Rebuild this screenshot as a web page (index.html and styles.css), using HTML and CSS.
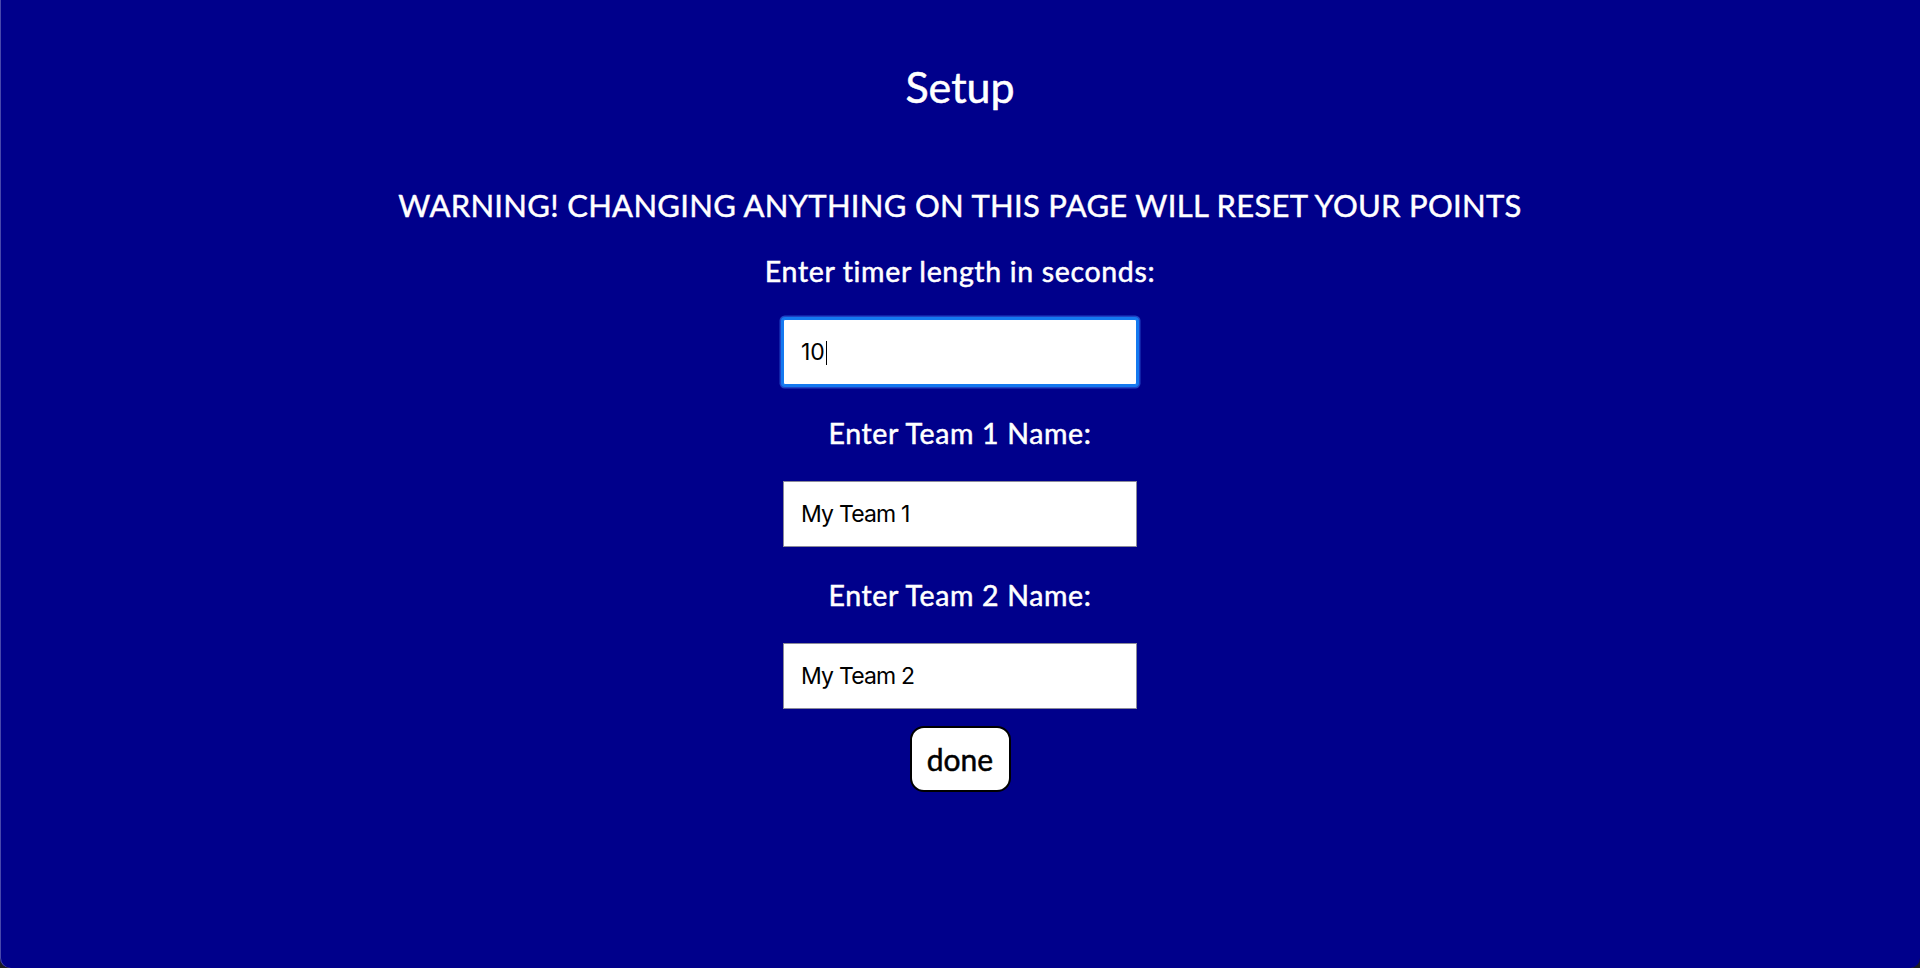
FILE: index.html
```html
<!DOCTYPE html>
<html lang="en">
<head>
<meta charset="utf-8">
<title>Setup</title>
<link rel="stylesheet" href="styles.css">
</head>
<body>
<main class="page">
  <h1 class="title">Setup</h1>
  <h2 class="warning">WARNING! CHANGING ANYTHING ON THIS PAGE WILL RESET YOUR POINTS</h2>
  <form class="setup-form">
    <label class="field-label" for="timer">Enter timer length in seconds:</label>
    <span class="input-wrap">
      <input class="text-input is-focused" id="timer" type="text" value="10">
      <span class="caret"></span>
    </span>
    <label class="field-label" for="team1">Enter Team 1 Name:</label>
    <input class="text-input" id="team1" type="text" value="My Team 1">
    <label class="field-label" for="team2">Enter Team 2 Name:</label>
    <input class="text-input" id="team2" type="text" value="My Team 2">
  </form>
  <button class="done-btn" type="button">done</button>
</main>
</body>
</html>
```
FILE: styles.css
```css
html {
  background: #1b1b22;
}

body {
  margin: 0;
  height: 968px;
  overflow: hidden;
  background: #00008b;
  border-radius: 0 0 10px 10px;
  box-shadow: inset 1px 0 0 rgba(160, 160, 210, 0.45);
  font-family: "Lato", "Liberation Sans", sans-serif;
  color: #ffffff;
}

.page {
  display: flex;
  flex-direction: column;
  align-items: center;
  padding-top: 61px;
  text-align: center;
}

.title {
  margin: 0;
  font-size: 43px;
  font-weight: 400;
  line-height: 1.2;
  -webkit-text-stroke: 0.5px #ffffff;
}

.warning {
  margin: 74px 0 0;
  font-size: 31px;
  font-weight: 400;
  line-height: 1.2;
  letter-spacing: 0.3px;
  -webkit-text-stroke: 0.45px #ffffff;
}

.setup-form {
  display: flex;
  flex-direction: column;
  align-items: center;
  gap: 31px;
  margin-top: 30px;
}

.field-label {
  font-size: 28.5px;
  line-height: 1.2;
  letter-spacing: 0.65px;
  -webkit-text-stroke: 0.5px #ffffff;
}

.input-wrap {
  position: relative;
  display: block;
}

.text-input {
  display: block;
  box-sizing: border-box;
  width: 354px;
  height: 66px;
  margin: 0;
  padding: 0 17px;
  border: 1px solid #8a8a9a;
  border-radius: 0;
  background: #ffffff;
  color: #000000;
  font-family: "Inter", "Liberation Sans", sans-serif;
  font-size: 23px;
  letter-spacing: -0.8px;
  outline: none;
}

.text-input.is-focused {
  letter-spacing: 0;
  border-color: #1479f0;
  box-shadow: 0 0 0 2px #1479f0, 0 0 0 3.5px rgba(40, 90, 215, 0.75);
  border-radius: 2px;
}

.caret {
  position: absolute;
  left: 43px;
  top: 22px;
  width: 1px;
  height: 24px;
  background: #000000;
}

.done-btn {
  box-sizing: border-box;
  width: 101px;
  height: 66px;
  margin-top: 17px;
  padding: 0;
  border: 2px solid #000000;
  border-radius: 14px;
  background: #ffffff;
  color: #000000;
  font-family: "Lato", "Liberation Sans", sans-serif;
  font-size: 30px;
  line-height: 1;
  -webkit-text-stroke: 0.5px #000000;
}
```
